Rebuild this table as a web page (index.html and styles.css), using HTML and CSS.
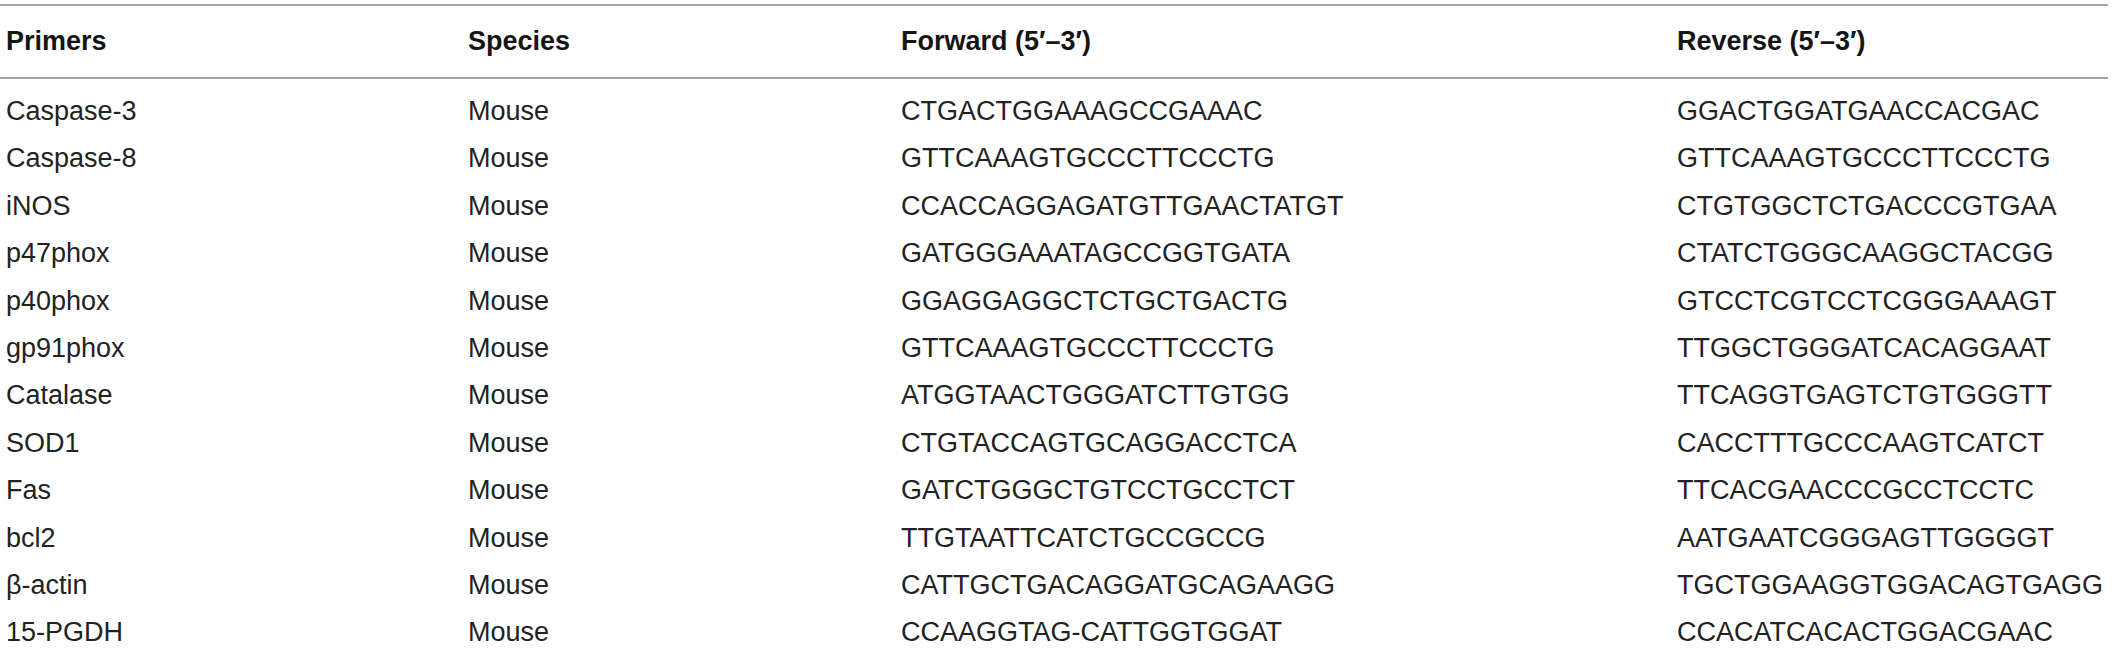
FILE: index.html
```html
<!DOCTYPE html>
<html lang="en">
<head>
<meta charset="utf-8">
<title>Primers</title>
<link rel="stylesheet" href="styles.css">
</head>
<body>
<div class="table">
  <div class="row head">
    <div>Primers</div><div>Species</div><div>Forward (5′–3′)</div><div>Reverse (5′–3′)</div>
  </div>
  <div class="body">
    <div class="row"><div>Caspase-3</div><div>Mouse</div><div>CTGACTGGAAAGCCGAAAC</div><div>GGACTGGATGAACCACGAC</div></div>
    <div class="row"><div>Caspase-8</div><div>Mouse</div><div>GTTCAAAGTGCCCTTCCCTG</div><div>GTTCAAAGTGCCCTTCCCTG</div></div>
    <div class="row"><div>iNOS</div><div>Mouse</div><div>CCACCAGGAGATGTTGAACTATGT</div><div>CTGTGGCTCTGACCCGTGAA</div></div>
    <div class="row"><div>p47phox</div><div>Mouse</div><div>GATGGGAAATAGCCGGTGATA</div><div>CTATCTGGGCAAGGCTACGG</div></div>
    <div class="row"><div>p40phox</div><div>Mouse</div><div>GGAGGAGGCTCTGCTGACTG</div><div>GTCCTCGTCCTCGGGAAAGT</div></div>
    <div class="row"><div>gp91phox</div><div>Mouse</div><div>GTTCAAAGTGCCCTTCCCTG</div><div>TTGGCTGGGATCACAGGAAT</div></div>
    <div class="row"><div>Catalase</div><div>Mouse</div><div>ATGGTAACTGGGATCTTGTGG</div><div>TTCAGGTGAGTCTGTGGGTT</div></div>
    <div class="row"><div>SOD1</div><div>Mouse</div><div>CTGTACCAGTGCAGGACCTCA</div><div>CACCTTTGCCCAAGTCATCT</div></div>
    <div class="row"><div>Fas</div><div>Mouse</div><div>GATCTGGGCTGTCCTGCCTCT</div><div>TTCACGAACCCGCCTCCTC</div></div>
    <div class="row"><div>bcl2</div><div>Mouse</div><div>TTGTAATTCATCTGCCGCCG</div><div>AATGAATCGGGAGTTGGGGT</div></div>
    <div class="row"><div>β-actin</div><div>Mouse</div><div>CATTGCTGACAGGATGCAGAAGG</div><div>TGCTGGAAGGTGGACAGTGAGG</div></div>
    <div class="row"><div>15-PGDH</div><div>Mouse</div><div>CCAAGGTAG-CATTGGTGGAT</div><div>CCACATCACACTGGACGAAC</div></div>
  </div>
</div>
</body>
</html>
```
FILE: styles.css
```css
html, body {
  margin: 0;
  padding: 0;
  background: #ffffff;
}
body {
  font-family: "Liberation Sans", Arial, Helvetica, sans-serif;
  font-size: 27px;
  color: #222222;
  overflow: hidden;
}
.table {
  width: 2108px;
  padding-top: 4px;
}
.row {
  display: grid;
  grid-template-columns: 462px 433px 776px 1fr;
  padding-left: 6px;
  line-height: 47.4px;
  white-space: nowrap;
}
.head {
  border-top: 2px solid #a3a3a3;
  border-bottom: 2px solid #a3a3a3;
  line-height: 71px;
  font-weight: bold;
  color: #151515;
}
.body {
  padding-top: 9px;
}
```
